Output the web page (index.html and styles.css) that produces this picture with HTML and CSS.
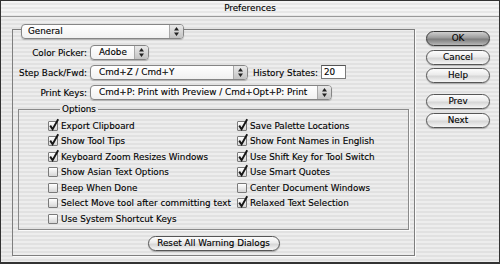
FILE: index.html
```html
<!DOCTYPE html>
<html>
<head>
<meta charset="utf-8">
<link rel="stylesheet" href="styles.css">
</head>
<body>
<div class="window">
  <div class="titlebar">Preferences</div>
  <div class="main">
    <div class="panel">
      <div class="popup general"><span class="ptext">General</span><span class="arrows"><svg width="5" height="9" viewBox="0 0 5 9"><path d="M2.5 0L5 3.5H0Z M0 5.5H5L2.5 9Z"/></svg></span></div>
      <div class="form">
        <span class="lbl">Color Picker:</span>
        <div class="ctl"><div class="popup w-adobe"><span class="ptext">Adobe</span><span class="arrows"><svg width="5" height="9" viewBox="0 0 5 9"><path d="M2.5 0L5 3.5H0Z M0 5.5H5L2.5 9Z"/></svg></span></div></div>
        <span class="lbl">Step Back/Fwd:</span>
        <div class="ctl"><div class="popup w-step"><span class="ptext">Cmd+Z / Cmd+Y</span><span class="arrows"><svg width="5" height="9" viewBox="0 0 5 9"><path d="M2.5 0L5 3.5H0Z M0 5.5H5L2.5 9Z"/></svg></span></div><span class="hlbl">History States:</span><span class="field">20</span></div>
        <span class="lbl">Print Keys:</span>
        <div class="ctl"><div class="popup w-print"><span class="ptext">Cmd+P: Print with Preview / Cmd+Opt+P: Print</span><span class="arrows"><svg width="5" height="9" viewBox="0 0 5 9"><path d="M2.5 0L5 3.5H0Z M0 5.5H5L2.5 9Z"/></svg></span></div></div>
      </div>
      <fieldset class="options">
        <legend>Options</legend>
        <div class="checks">
          <div class="chk"><span class="cb on"><svg class="tick" viewBox="0 0 12 12"><path d="M2.2 4.6L4.6 8.2L10.2 -1.8"/></svg></span>Export Clipboard</div>
          <div class="chk"><span class="cb on"><svg class="tick" viewBox="0 0 12 12"><path d="M2.2 4.6L4.6 8.2L10.2 -1.8"/></svg></span>Show Tool Tips</div>
          <div class="chk"><span class="cb on"><svg class="tick" viewBox="0 0 12 12"><path d="M2.2 4.6L4.6 8.2L10.2 -1.8"/></svg></span>Keyboard Zoom Resizes Windows</div>
          <div class="chk"><span class="cb"></span>Show Asian Text Options</div>
          <div class="chk"><span class="cb"></span>Beep When Done</div>
          <div class="chk"><span class="cb"></span>Select Move tool after committing text</div>
          <div class="chk"><span class="cb"></span>Use System Shortcut Keys</div>
          <div class="chk"><span class="cb on"><svg class="tick" viewBox="0 0 12 12"><path d="M2.2 4.6L4.6 8.2L10.2 -1.8"/></svg></span>Save Palette Locations</div>
          <div class="chk"><span class="cb on"><svg class="tick" viewBox="0 0 12 12"><path d="M2.2 4.6L4.6 8.2L10.2 -1.8"/></svg></span>Show Font Names in English</div>
          <div class="chk"><span class="cb on"><svg class="tick" viewBox="0 0 12 12"><path d="M2.2 4.6L4.6 8.2L10.2 -1.8"/></svg></span>Use Shift Key for Tool Switch</div>
          <div class="chk"><span class="cb on"><svg class="tick" viewBox="0 0 12 12"><path d="M2.2 4.6L4.6 8.2L10.2 -1.8"/></svg></span>Use Smart Quotes</div>
          <div class="chk"><span class="cb"></span>Center Document Windows</div>
          <div class="chk"><span class="cb on"><svg class="tick" viewBox="0 0 12 12"><path d="M2.2 4.6L4.6 8.2L10.2 -1.8"/></svg></span>Relaxed Text Selection</div>
        </div>
      </fieldset>
      <div class="reset-row"><span class="btn reset">Reset All Warning Dialogs</span></div>
    </div>
    <div class="buttons">
      <span class="btn default">OK</span>
      <span class="btn gap4">Cancel</span>
      <span class="btn gap3">Help</span>
      <span class="btn gap11">Prev</span>
      <span class="btn gap4">Next</span>
    </div>
  </div>
</div>
</body>
</html>
```

FILE: styles.css
```css
html, body {
  margin: 0;
  padding: 0;
}

.window {
  width: 500px;
  height: 264px;
  box-sizing: border-box;
  border: 1px solid #333;
  border-bottom-width: 2px;
  background: repeating-linear-gradient(to bottom, #ededed 0 2px, #e1e1e1 2px 4px);
  font-family: "DejaVu Sans", sans-serif;
  font-size: 8.8px;
  color: #000;
  -webkit-text-stroke: 0.12px #000;
  overflow: hidden;
}

.titlebar {
  height: 15px;
  line-height: 15px;
  text-align: center;
  border-bottom: 1px solid #9a9a9a;
  background: repeating-linear-gradient(to bottom, #f4f4f4 0 2px, #e7e7e7 2px 4px);
}

.main {
  display: flex;
  align-items: flex-start;
}

.panel {
  margin: 12px 0 0 11px;
  width: 403px;
  height: 227px;
  box-sizing: border-box;
  border: 1px solid #7e7e7e;
  box-shadow: 1px 1px 0 #fafafa;
  display: flex;
  flex-direction: column;
  align-items: flex-start;
}

.popup {
  height: 15px;
  box-sizing: border-box;
  border: 1px solid #858585;
  border-radius: 4px;
  background: linear-gradient(to bottom, #ffffff, #f1f1f1);
  box-shadow: 0 1px 1px rgba(0, 0, 0, 0.22);
  display: flex;
  align-items: stretch;
}

.ptext {
  flex: 1;
  padding-left: 8px;
  line-height: 13px;
  white-space: nowrap;
  overflow: hidden;
}

.arrows {
  width: 13px;
  border-left: 1px solid #a8a8a8;
  border-radius: 0 3px 3px 0;
  background: linear-gradient(to bottom, #e9e9e9, #c3c3c3);
  display: flex;
  align-items: center;
  justify-content: center;
}

.arrows svg path {
  fill: #222;
}

.general {
  margin: -6px 0 0 8px;
  width: 163px;
}

.general .ptext {
  padding-left: 6px;
}

.form {
  margin-top: 6px;
  display: grid;
  grid-template-columns: 74px auto;
  column-gap: 3px;
  row-gap: 5px;
  grid-auto-rows: 15px;
  align-items: center;
}

.lbl {
  text-align: right;
  white-space: nowrap;
}

.ctl {
  display: flex;
  align-items: center;
}

.w-adobe { width: 59px; }
.w-step { width: 158px; }
.w-print { width: 242px; }

.hlbl {
  margin-left: 5px;
  white-space: nowrap;
}

.field {
  margin: -2px 0 0 3px;
  width: 25px;
  height: 14px;
  box-sizing: border-box;
  border: 1px solid #7a7a7a;
  border-top-color: #555;
  background: #fff;
  padding-left: 2px;
  line-height: 12px;
}

.options {
  margin: 4px 0 0 5px;
  width: 391px;
  box-sizing: border-box;
  padding: 3px 0 2.5px 29px;
  border: 1px solid #8a8a8a;
  box-shadow: 1px 1px 0 #fafafa;
  min-inline-size: 0;
}

.options legend {
  margin-left: 12px;
  padding: 0 2px;
  line-height: 11px;
}

.checks {
  display: grid;
  grid-template-rows: repeat(7, 15.5px);
  grid-template-columns: 189px auto;
  grid-auto-flow: column;
}

.chk {
  display: flex;
  align-items: center;
  white-space: nowrap;
}

.cb {
  position: relative;
  width: 10px;
  height: 10px;
  box-sizing: border-box;
  border: 1px solid #7a7a7a;
  border-radius: 1px;
  background: linear-gradient(to bottom, #ffffff, #d6d6d6);
  margin-right: 3px;
  flex: none;
}

.tick {
  position: absolute;
  left: -1px;
  top: -1px;
  width: 12px;
  height: 12px;
  overflow: visible;
}

.tick path {
  fill: none;
  stroke: #161616;
  stroke-width: 1.9;
}

.reset-row {
  align-self: stretch;
  display: flex;
  justify-content: center;
  margin-top: 6px;
}

.btn {
  display: block;
  width: 64px;
  height: 15px;
  box-sizing: border-box;
  border: 1px solid #565656;
  border-radius: 8px;
  background: linear-gradient(to bottom, #fdfdfd, #ebebeb 45%, #d6d6d6 55%, #f5f5f5);
  box-shadow: 0 1px 1px rgba(0, 0, 0, 0.25);
  text-align: center;
  line-height: 13px;
  white-space: nowrap;
}

.btn.default {
  border-color: #3a3a3a;
  background: linear-gradient(to bottom, #cfcfcf, #9c9c9c 45%, #7e7e7e 55%, #b6b6b6);
}

.btn.reset {
  width: 132px;
}

.buttons {
  margin: 14px 0 0 11px;
  display: flex;
  flex-direction: column;
}

.gap3 { margin-top: 3px; }
.gap4 { margin-top: 4px; }
.gap11 { margin-top: 11px; }
```
